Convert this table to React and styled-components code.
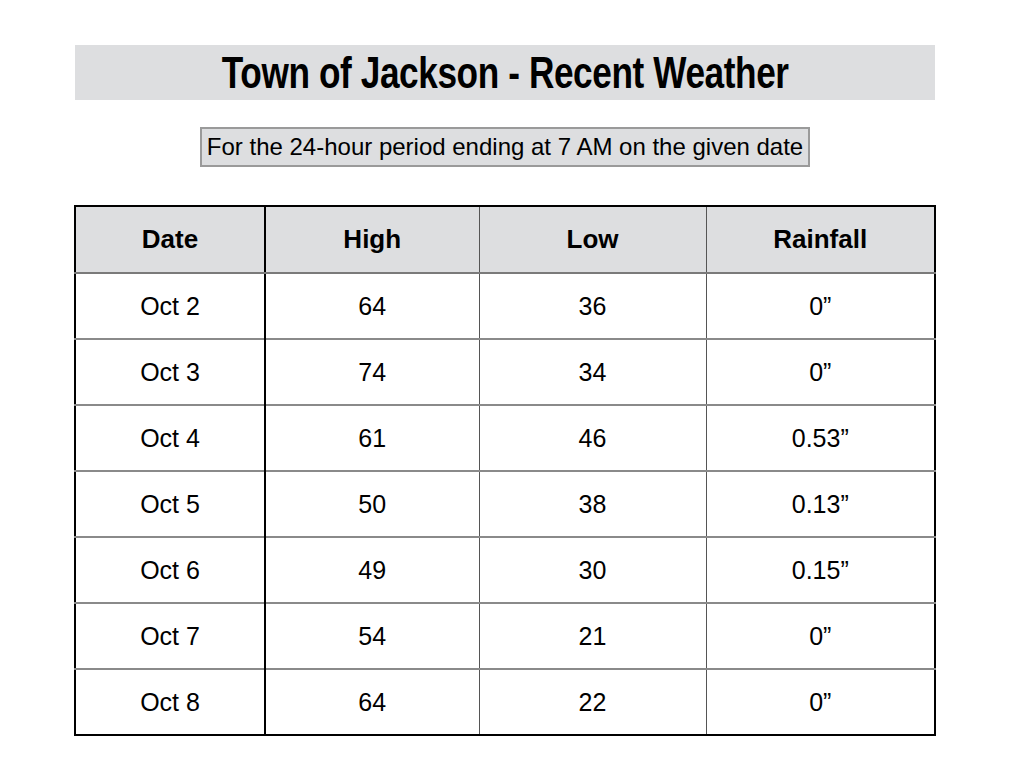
import React from "react";
import styled, { createGlobalStyle } from "styled-components";

const GlobalStyle = createGlobalStyle`
  body {
    margin: 0;
    background: #fff;
    font-family: "Liberation Sans", Arial, sans-serif;
    color: #000;
  }
`;

const weather = [
  { date: "Oct 2", high: 64, low: 36, rain: "0”" },
  { date: "Oct 3", high: 74, low: 34, rain: "0”" },
  { date: "Oct 4", high: 61, low: 46, rain: "0.53”" },
  { date: "Oct 5", high: 50, low: 38, rain: "0.13”" },
  { date: "Oct 6", high: 49, low: 30, rain: "0.15”" },
  { date: "Oct 7", high: 54, low: 21, rain: "0”" },
  { date: "Oct 8", high: 64, low: 22, rain: "0”" },
];

const Page = styled.main`
  width: 860px;
  padding: 45px 0 0 75px;
  display: flex;
  flex-direction: column;
  align-items: center;
`;

const TitleBar = styled.h1`
  align-self: stretch;
  margin: 0;
  height: 55px;
  background: #dddee0;
  display: flex;
  align-items: center;
  justify-content: center;
  font-weight: 700;
  font-size: 44px;
  letter-spacing: -0.5px;
`;

// no condensed face installed, so squeeze the bold face
const Condensed = styled.span`
  display: inline-block;
  white-space: nowrap;
  transform: scaleX(0.8);
`;

const Note = styled.p`
  margin: 27px 0 0;
  height: 36px;
  padding: 0 5px;
  display: flex;
  align-items: center;
  background: #dddee0;
  border: 2px solid #9a9a9a;
  font-size: 24px;
  white-space: nowrap;
`;

const Table = styled.table`
  margin-top: 38px;
  width: 860px;
  border-collapse: collapse;
  table-layout: fixed;
  border: 2px solid #000;
`;

const HeadCell = styled.th`
  height: 65px;
  padding: 0;
  background: #dddee0;
  font-size: 26px;
  font-weight: 700;
  border-bottom: 2px solid #7a7a7a;
  border-left: ${(p) => (p.$strong ? "2px solid #000" : "1px solid #555")};
`;

const Cell = styled.td`
  height: 64px;
  padding: 0;
  text-align: center;
  font-size: 25px;
  border-top: 2px solid #8a8a8a;
  border-left: ${(p) => (p.$strong ? "2px solid #000" : "1px solid #555")};
`;

export default function App() {
  return (
    <>
      <GlobalStyle />
      <Page>
        <TitleBar>
          <Condensed>Town of Jackson - Recent Weather</Condensed>
        </TitleBar>
        <Note>For the 24-hour period ending at 7 AM on the given date</Note>
        <Table>
          <colgroup>
            <col style={{ width: 190 }} />
            <col style={{ width: 214 }} />
            <col style={{ width: 227 }} />
            <col style={{ width: 229 }} />
          </colgroup>
          <thead>
            <tr>
              <HeadCell>Date</HeadCell>
              <HeadCell $strong>High</HeadCell>
              <HeadCell>Low</HeadCell>
              <HeadCell>Rainfall</HeadCell>
            </tr>
          </thead>
          <tbody>
            {weather.map((row) => (
              <tr key={row.date}>
                <Cell>{row.date}</Cell>
                <Cell $strong>{row.high}</Cell>
                <Cell>{row.low}</Cell>
                <Cell>{row.rain}</Cell>
              </tr>
            ))}
          </tbody>
        </Table>
      </Page>
    </>
  );
}
